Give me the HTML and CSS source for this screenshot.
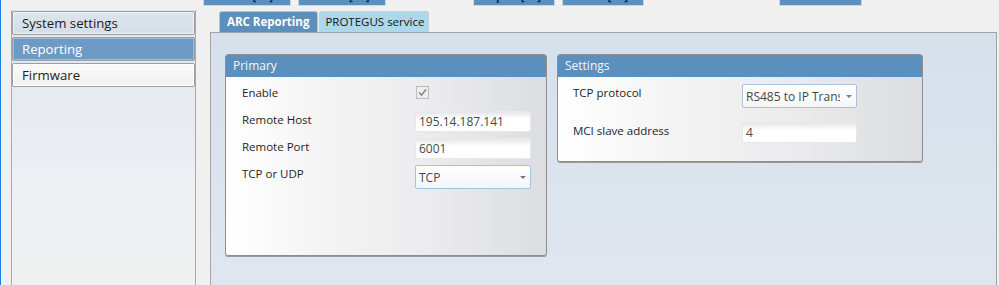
FILE: index.html
```html
<!DOCTYPE html>
<html lang="en">
<head>
    <meta charset="UTF-8">
    <title>Reporting</title>
    <link rel="stylesheet" href="styles.css">
</head>
<body>

<div class="toolbar">
    <div class="tool-btn btn-read">Read [F4]</div>
    <div class="tool-btn btn-write">Write [F5]</div>
    <div class="tool-btn btn-open">Open [F6]</div>
    <div class="tool-btn btn-save">Save [F7]</div>
    <div class="tool-btn btn-disconnect">Disconnect</div>
</div>

<div class="main">
    <nav class="sidebar">
        <div class="side-item">System settings</div>
        <div class="side-item active">Reporting</div>
        <div class="side-item light">Firmware</div>
    </nav>

    <section class="workspace">
        <div class="tabs">
            <div class="tab selected">ARC Reporting</div>
            <div class="tab">PROTEGUS service</div>
        </div>

        <div class="tab-panel">
            <div class="group primary">
                <div class="group-header">Primary</div>
                <div class="group-body">
                    <div class="row">
                        <span class="label">Enable</span>
                        <span class="checkbox">
                            <svg width="11" height="11" viewBox="0 0 11 11">
                                <path d="M2 5.5 L4.5 8 L9 2.5" fill="none" stroke="#8a8a8a" stroke-width="1.6"/>
                            </svg>
                        </span>
                    </div>
                    <div class="row">
                        <span class="label">Remote Host</span>
                        <span class="textbox">195.14.187.141</span>
                    </div>
                    <div class="row">
                        <span class="label">Remote Port</span>
                        <span class="textbox">6001</span>
                    </div>
                    <div class="row">
                        <span class="label">TCP or UDP</span>
                        <span class="combo"><span class="combo-text">TCP</span><span class="arrow"></span></span>
                    </div>
                </div>
            </div>

            <div class="group settings">
                <div class="group-header">Settings</div>
                <div class="group-body">
                    <div class="row">
                        <span class="label">TCP protocol</span>
                        <span class="combo"><span class="combo-text">RS485 to IP Transparent</span><span class="arrow"></span></span>
                    </div>
                    <div class="row">
                        <span class="label">MCI slave address</span>
                        <span class="textbox">4</span>
                    </div>
                </div>
            </div>
        </div>
    </section>
</div>

</body>
</html>
```

FILE: styles.css
```css
body {
    margin: 0;
    height: 285px;
    overflow: hidden;
    background-color: #f0f0f0;
    border-left: 1px solid #1a7fd8;
    font-family: 'Open Sans', 'Noto Sans', sans-serif;
    font-size: 11.5px;
    color: #1e1e1e;
}

.toolbar {
    display: flex;
    align-items: flex-end;
    height: 6px;
    overflow: hidden;
}

.tool-btn {
    flex: none;
    height: 22px;
    box-sizing: border-box;
    background-color: #5b8fbe;
    border: 1px solid #c9d7e5;
    color: #0c1f5e;
    font-weight: 700;
    text-align: center;
    line-height: 22px;
}

.btn-read { width: 88px; margin-left: 202px; }
.btn-write { width: 88px; margin-left: 7px; }
.btn-open { width: 82px; margin-left: 87px; }
.btn-save { width: 82px; margin-left: 7px; }
.btn-disconnect { width: 83px; margin-left: 135px; }

.main {
    display: flex;
    margin-top: 4px;
    height: 275px;
}

/* left navigation */
.sidebar {
    width: 185px;
    box-sizing: border-box;
    margin-left: 10px;
    padding-top: 1px;
    border-left: 1px solid #a8a8a8;
    border-right: 1px solid #a8a8a8;
    background: linear-gradient(#dfe6ef, #eef0f3 70%, #f0f0f0);
    display: flex;
    flex-direction: column;
    gap: 2px;
}

.side-item {
    height: 24px;
    box-sizing: border-box;
    border: 1px solid #9e9e9e;
    border-radius: 2px;
    box-shadow: inset 0 0 0 1px #eef2f6;
    background: linear-gradient(#dce4ed, #d5dee8);
    font-size: 13.2px;
    line-height: 23px;
    padding-left: 9px;
    color: #1a1a1a;
}

.side-item.active {
    background: #6d9bc6;
    box-shadow: inset 0 0 0 1px #9dbcd9;
    color: #ffffff;
}

.side-item.light {
    background: linear-gradient(#fafafa, #f1f1f1);
    box-shadow: inset 0 0 0 1px #ffffff;
    color: #2a1a0a;
}

/* tabs */
.workspace {
    width: 787px;
    margin-left: 14px;
    display: flex;
    flex-direction: column;
}

.tabs {
    display: flex;
    padding-left: 9px;
    margin-top: 1px;
    height: 21px;
}

.tab {
    height: 21px;
    box-sizing: border-box;
    padding: 0 4px 0 5px;
    border: 1px solid #c6ced6;
    border-bottom: none;
    border-radius: 3px 3px 0 0;
    background-color: #acd8e9;
    line-height: 20px;
    color: #141414;
    margin-left: 1px;
}

.tab.selected {
    background-color: #5b8fbe;
    border-color: #b5c4d2;
    color: #ffffff;
    font-weight: 700;
    padding: 0 8px 0 7px;
    margin-left: 0;
}

.tab-panel {
    flex: 1;
    border: 1px solid #a3a3a3;
    border-bottom: none;
    background: linear-gradient(#d6e0eb, #dfe6ef);
    display: flex;
    align-items: flex-start;
    gap: 10px;
    padding: 21px 0 0 14px;
}

/* group boxes */
.group {
    box-sizing: border-box;
    border: 1px solid #8e8e8e;
    border-radius: 3px;
    box-shadow: 0 1px 0 #9a9a9a;
    background: linear-gradient(to right, #ffffff, #f4f4f4 30%, #ebebed 65%, #dcdde0);
    overflow: hidden;
}

.group.primary {
    width: 322px;
    height: 202px;
}

.group.settings {
    width: 366px;
    height: 108px;
}

.group-header {
    height: 22px;
    background-color: #5b8fbe;
    color: #f2f6fa;
    font-size: 12px;
    line-height: 22px;
    padding-left: 7px;
}

.group-body {
    display: flex;
    flex-direction: column;
    gap: 6px;
    padding: 7px 0 0 16px;
}

.settings .group-body {
    gap: 14px;
    padding-left: 15px;
}

.row {
    display: flex;
    align-items: flex-start;
    min-height: 21px;
}

.label {
    width: 173px;
    line-height: 18px;
}

.settings .label {
    width: 169px;
}

.checkbox {
    width: 13px;
    height: 13px;
    box-sizing: border-box;
    margin: 2px 0 0 1px;
    border: 1px solid #bcbcbc;
    background: #eeeeee;
    display: flex;
    align-items: center;
    justify-content: center;
}

.textbox {
    width: 116px;
    height: 21px;
    box-sizing: border-box;
    border: 1px solid #e8e8e8;
    border-radius: 2px;
    background: linear-gradient(#e6e6e6, #ffffff 7px);
    color: #474747;
    font-size: 12px;
    line-height: 19px;
    padding-left: 3px;
}

.settings .textbox {
    width: 115px;
}

.combo {
    width: 116px;
    height: 24px;
    box-sizing: border-box;
    border: 1px solid #a9c2dc;
    border-radius: 2px;
    background: linear-gradient(#ffffff, #f3f6f9);
    display: flex;
    align-items: center;
    padding: 0 4px 0 3px;
    color: #474747;
    font-size: 12px;
}

.settings .combo {
    width: 115px;
}

.combo-text {
    flex: 1;
    overflow: hidden;
    white-space: nowrap;
}

.arrow {
    width: 0;
    height: 0;
    margin-left: 6px;
    border-left: 3px solid transparent;
    border-right: 3px solid transparent;
    border-top: 3px solid #7a7a7a;
}
```
